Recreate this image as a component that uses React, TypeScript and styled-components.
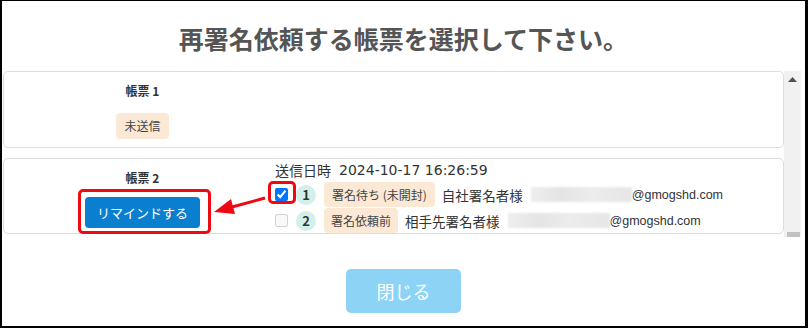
import styled, { createGlobalStyle } from "styled-components";

const Global = createGlobalStyle`
	html, body {
		margin: 0;
		padding: 0;
		background: #fff;
	}
	body {
		font-family: "Noto Sans CJK JP", "Noto Sans", sans-serif;
		color: #333;
	}
`;

const Frame = styled.div`
	width: 808px;
	height: 328px;
	box-sizing: border-box;
	border-style: solid;
	border-color: #000;
	border-width: 1px 3px 2px 2px;
	display: flex;
	flex-direction: column;
`;

const Title = styled.h2`
	margin: 20px 0 16px;
	font-size: 25px;
	font-weight: 700;
	line-height: 34px;
	text-align: center;
	color: #555;
`;

const ScrollArea = styled.div`
	display: flex;
	height: 166px;
	margin: 0 4px 0 1px;
`;

const CardList = styled.div`
	flex: 1;
	overflow: hidden;
	display: flex;
	flex-direction: column;
	gap: 10px;
`;

const ScrollTrack = styled.div`
	width: 17px;
	flex: none;
	background: #f1f1f1;
	display: flex;
	flex-direction: column;
	justify-content: space-between;
	align-items: center;
`;

const ScrollButton = styled.div`
	width: 17px;
	height: 17px;
	display: flex;
	align-items: center;
	justify-content: center;
`;

const ScrollThumb = styled.div`
	width: 13px;
	height: 5px;
	margin-left: 2px;
	background: #c1c1c1;
`;

const Card = styled.div`
	flex: none;
	position: relative;
	border: 1px solid #ddd;
	border-radius: 5px;
	display: grid;
	grid-template-columns: 271px 1fr;
`;

const LeftCol = styled.div<{ $pb?: number }>`
	display: flex;
	flex-direction: column;
	align-items: center;
	padding: 10px 0 ${(p) => p.$pb ?? 0}px 6px;
`;

const SheetLabel = styled.div`
	font-size: 12px;
	font-weight: 700;
	line-height: 18px;
	color: #333;
`;

const Badge = styled.span<{ $h?: number; $px?: number; $mt?: number }>`
	display: inline-block;
	height: ${(p) => p.$h ?? 25}px;
	line-height: ${(p) => p.$h ?? 25}px;
	padding: 0 ${(p) => p.$px ?? 7}px;
	margin-top: ${(p) => p.$mt ?? 0}px;
	border-radius: 4px;
	background: #fbe9d5;
	font-size: 12px;
	color: #444;
	white-space: nowrap;
	flex: none;
`;

const Holder = styled.div<{ $mt?: number }>`
	position: relative;
	margin-top: ${(p) => p.$mt ?? 0}px;
	display: flex;
`;

const RedMark = styled.div<{ $inset: string }>`
	position: absolute;
	inset: ${(p) => p.$inset};
	border: 3px solid #ee0a12;
	border-radius: 5px;
	pointer-events: none;
`;

const RemindButton = styled.button`
	width: 115px;
	height: 31px;
	padding: 0;
	border: none;
	border-radius: 4px;
	background: #0a7ecf;
	color: #fff;
	font-family: inherit;
	font-size: 13px;
`;

const RightCol = styled.div`
	padding-top: 1px;
	display: flex;
	flex-direction: column;
`;

const SentAt = styled.div`
	display: flex;
	font-size: 14px;
	line-height: 20px;
	height: 20px;
	margin-bottom: 2px;
	color: #333;
	white-space: nowrap;
`;

const Stamp = styled.span`
	margin-left: 8px;
	font-family: "DejaVu Sans", "Noto Sans CJK JP", sans-serif;
`;

const Row = styled.div<{ $mb?: number }>`
	display: flex;
	align-items: center;
	height: 25px;
	margin-bottom: ${(p) => p.$mb ?? 0}px;
	white-space: nowrap;
`;

const Check = styled.input`
	width: 13px;
	height: 13px;
	margin: 0;
	display: block;
`;

const Num = styled.span`
	width: 20px;
	height: 20px;
	margin: 0 8px;
	border-radius: 50%;
	background: #d2efeb;
	font-size: 13px;
	font-weight: 700;
	line-height: 20px;
	text-align: center;
	color: #333;
	flex: none;
`;

const Name = styled.span`
	margin: 0 8px 0 7px;
	font-size: 13.5px;
	color: #333;
`;

const Masked = styled.span<{ $w: number }>`
	width: ${(p) => p.$w}px;
	height: 15px;
	flex: none;
	background: linear-gradient(90deg, #eeeeee, #e4e4e4 30%, #ececec 60%, #e6e6e6);
	filter: blur(1px);
`;

const Email = styled.span`
	font-family: "Liberation Sans", Arial, sans-serif;
	font-size: 12.5px;
	color: #333;
`;

const Arrow = styled.svg`
	position: absolute;
	left: 0;
	top: 0;
	width: 100%;
	height: 100%;
	overflow: visible;
	pointer-events: none;
`;

const Footer = styled.div`
	display: flex;
	justify-content: center;
	padding-top: 32px;
`;

const CloseButton = styled.button`
	width: 115px;
	height: 44px;
	padding: 0;
	border: none;
	border-radius: 5px;
	background: #8dd3f6;
	color: #fff;
	font-family: inherit;
	font-size: 18px;
`;

interface Signer {
	no: number;
	status: string;
	name: string;
	mask: number;
	checked?: boolean;
}

const signers: Signer[] = [
	{ no: 1, status: "署名待ち (未開封)", name: "自社署名者様", mask: 101, checked: true },
	{ no: 2, status: "署名依頼前", name: "相手先署名者様", mask: 102 },
];

function SignerRow({ signer, last }: { signer: Signer; last?: boolean }) {
	const box = <Check type="checkbox" checked={!!signer.checked} disabled={!signer.checked} readOnly />;
	return (
		<Row $mb={last ? 0 : 1}>
			{signer.checked ? (
				<Holder>
					{box}
					<RedMark $inset="-7px -8px -3px -7px" />
				</Holder>
			) : (
				box
			)}
			<Num>{signer.no}</Num>
			<Badge $px={signer.no === 1 ? 8 : 7}>{signer.status}</Badge>
			<Name>{signer.name}</Name>
			<Masked $w={signer.mask} />
			<Email>@gmogshd.com</Email>
		</Row>
	);
}

export default function App() {
	return (
		<>
			<Global />
			<Frame>
				<Title>再署名依頼する帳票を選択して下さい。</Title>
				<ScrollArea>
					<CardList>
						<Card>
							<LeftCol $pb={8}>
								<SheetLabel>帳票 1</SheetLabel>
								<Badge $h={26} $px={8} $mt={13}>
									未送信
								</Badge>
							</LeftCol>
							<div />
						</Card>
						<Card>
							<LeftCol>
								<SheetLabel>帳票 2</SheetLabel>
								<Holder $mt={10}>
									<RemindButton>リマインドする</RemindButton>
									<RedMark $inset="-8px -11px -6px -7px" />
								</Holder>
							</LeftCol>
							<RightCol>
								<SentAt>
									送信日時<Stamp>2024-10-17 16:26:59</Stamp>
								</SentAt>
								{signers.map((s, i) => (
									<SignerRow key={s.no} signer={s} last={i === signers.length - 1} />
								))}
							</RightCol>
							{/* annotation arrow: checkbox -> remind button */}
							<Arrow>
								<line x1="261" y1="39" x2="228" y2="48" stroke="#ee0a12" strokeWidth="3" />
								<polygon points="210,53 231,55 227,40" fill="#ee0a12" />
							</Arrow>
						</Card>
					</CardList>
					<ScrollTrack>
						<ScrollButton>
							<svg width="9" height="5" viewBox="0 0 9 5">
								<polygon points="0,5 4.5,0 9,5" fill="#505050" />
							</svg>
						</ScrollButton>
						<ScrollThumb />
					</ScrollTrack>
				</ScrollArea>
				<Footer>
					<CloseButton>閉じる</CloseButton>
				</Footer>
			</Frame>
		</>
	);
}
